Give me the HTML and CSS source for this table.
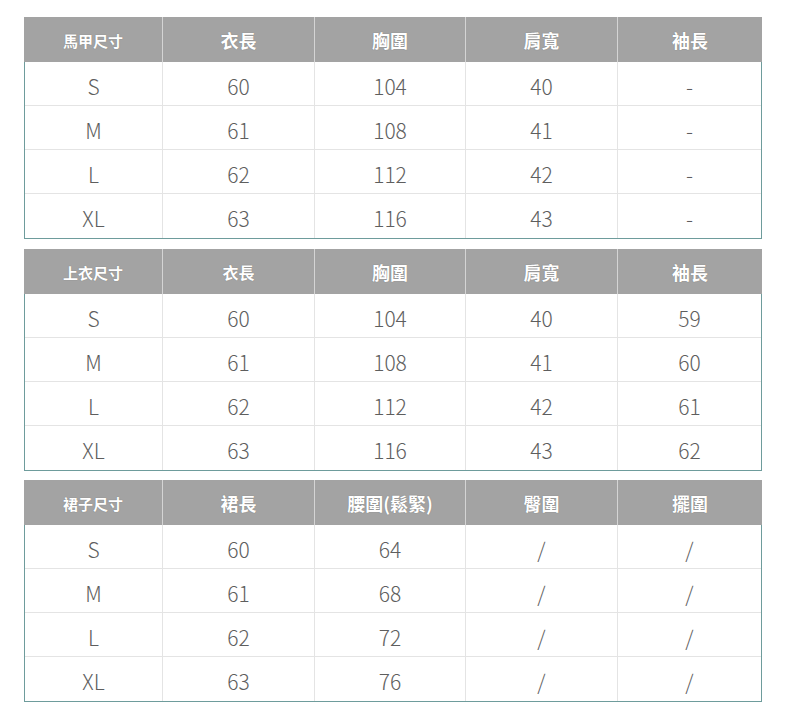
FILE: index.html
```html
<!DOCTYPE html>
<html lang="zh-Hant">
<head>
<meta charset="utf-8">
<title>尺寸表</title>
<link rel="stylesheet" href="styles.css">
</head>
<body>
<div class="page">
  <div class="size-table">
    <div class="head">
      <div class="hc small">馬甲尺寸</div>
      <div class="hc">衣長</div>
      <div class="hc">胸圍</div>
      <div class="hc">肩寬</div>
      <div class="hc">袖長</div>
    </div>
    <div class="body">
      <div class="row"><div class="c">S</div><div class="c">60</div><div class="c">104</div><div class="c">40</div><div class="c">-</div></div>
      <div class="row"><div class="c">M</div><div class="c">61</div><div class="c">108</div><div class="c">41</div><div class="c">-</div></div>
      <div class="row"><div class="c">L</div><div class="c">62</div><div class="c">112</div><div class="c">42</div><div class="c">-</div></div>
      <div class="row"><div class="c">XL</div><div class="c">63</div><div class="c">116</div><div class="c">43</div><div class="c">-</div></div>
    </div>
  </div>

  <div class="size-table">
    <div class="head">
      <div class="hc small">上衣尺寸</div>
      <div class="hc mid">衣長</div>
      <div class="hc">胸圍</div>
      <div class="hc">肩寬</div>
      <div class="hc">袖長</div>
    </div>
    <div class="body">
      <div class="row"><div class="c">S</div><div class="c">60</div><div class="c">104</div><div class="c">40</div><div class="c">59</div></div>
      <div class="row"><div class="c">M</div><div class="c">61</div><div class="c">108</div><div class="c">41</div><div class="c">60</div></div>
      <div class="row"><div class="c">L</div><div class="c">62</div><div class="c">112</div><div class="c">42</div><div class="c">61</div></div>
      <div class="row"><div class="c">XL</div><div class="c">63</div><div class="c">116</div><div class="c">43</div><div class="c">62</div></div>
    </div>
  </div>

  <div class="size-table last">
    <div class="head">
      <div class="hc small">裙子尺寸</div>
      <div class="hc">裙長</div>
      <div class="hc">腰圍(鬆緊)</div>
      <div class="hc">臀圍</div>
      <div class="hc">擺圍</div>
    </div>
    <div class="body">
      <div class="row"><div class="c">S</div><div class="c">60</div><div class="c">64</div><div class="c">/</div><div class="c">/</div></div>
      <div class="row"><div class="c">M</div><div class="c">61</div><div class="c">68</div><div class="c">/</div><div class="c">/</div></div>
      <div class="row"><div class="c">L</div><div class="c">62</div><div class="c">72</div><div class="c">/</div><div class="c">/</div></div>
      <div class="row"><div class="c">XL</div><div class="c">63</div><div class="c">76</div><div class="c">/</div><div class="c">/</div></div>
    </div>
  </div>
</div>
</body>
</html>
```
FILE: styles.css
```css
html, body {
  margin: 0;
  padding: 0;
  background: #ffffff;
}

.page {
  padding: 17px 0 0 24px;
  display: flex;
  flex-direction: column;
  width: 738px;
}

.size-table {
  width: 738px;
  margin-bottom: 10px;
}

.size-table + .size-table.last {
  margin-top: -1px;
}

.head {
  display: grid;
  grid-template-columns: 138px 152px 151px 152px 145px;
  height: 45px;
  background: #a3a3a3;
}

.hc {
  display: flex;
  align-items: center;
  justify-content: center;
  color: #ffffff;
  font-family: "Noto Sans CJK TC", "Noto Sans CJK SC", sans-serif;
  font-weight: 700;
  font-size: 18px;
  text-shadow: 0 0 1px rgba(0, 0, 0, 0.35);
  border-left: 1px solid #d4d4d4;
  padding-top: 1px;
}

.hc:first-child {
  border-left: none;
}

.hc.small {
  font-size: 15px;
}

.hc.mid {
  font-size: 16px;
}

.body {
  border: 1px solid #6e9c9c;
  border-top: none;
}

.row {
  display: grid;
  grid-template-columns: 137px 152px 151px 152px 144px;
  height: 44px;
  border-bottom: 1px solid #e4e4e4;
  box-sizing: border-box;
}

.row:last-child {
  border-bottom: none;
}

.c {
  display: flex;
  align-items: center;
  justify-content: center;
  border-left: 1px solid #e4e4e4;
  font-family: "Noto Sans CJK TC", "Noto Sans", sans-serif;
  font-weight: 300;
  font-size: 21px;
  color: #5e5e5e;
  padding-top: 4px;
}

.c:first-child {
  border-left: none;
}
```
